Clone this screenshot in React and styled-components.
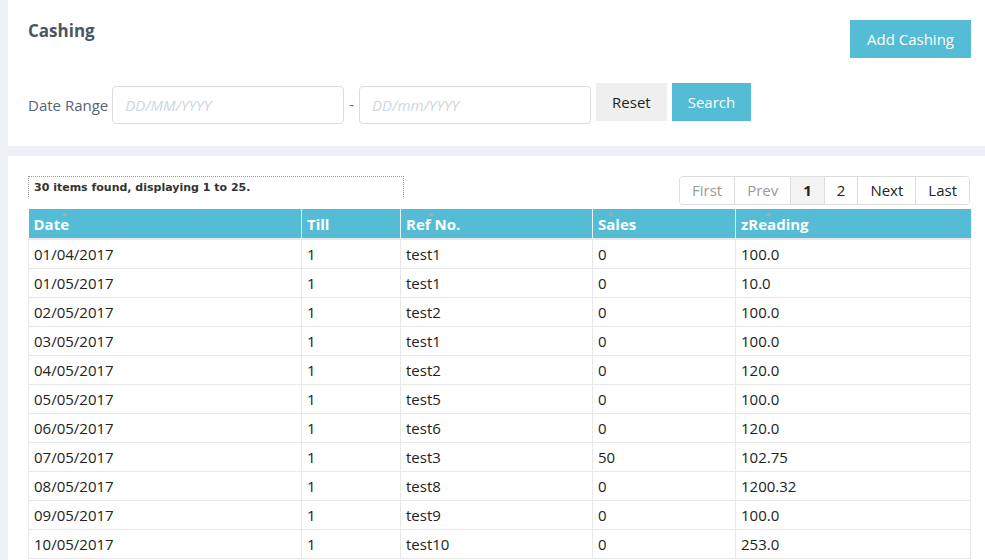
import React from "react";
import styled, { createGlobalStyle } from "styled-components";

const GlobalStyle = createGlobalStyle`
  html, body {
    margin: 0;
    background: #edf1f5;
    font-family: "Open Sans", "Noto Sans", sans-serif;
    overflow: hidden;
  }
`;

const rows = [
  ["01/04/2017", "1", "test1", "0", "100.0"],
  ["01/05/2017", "1", "test1", "0", "10.0"],
  ["02/05/2017", "1", "test2", "0", "100.0"],
  ["03/05/2017", "1", "test1", "0", "100.0"],
  ["04/05/2017", "1", "test2", "0", "120.0"],
  ["05/05/2017", "1", "test5", "0", "100.0"],
  ["06/05/2017", "1", "test6", "0", "120.0"],
  ["07/05/2017", "1", "test3", "50", "102.75"],
  ["08/05/2017", "1", "test8", "0", "1200.32"],
  ["09/05/2017", "1", "test9", "0", "100.0"],
  ["10/05/2017", "1", "test10", "0", "253.0"],
];

const columns = [
  { label: "Date", width: 273, caret: 72 },
  { label: "Till", width: 99 },
  { label: "Ref No.", width: 192, caret: 60 },
  { label: "Sales", width: 143, caret: 36 },
  { label: "zReading", width: 235, caret: 66 },
];

const pages = [
  { label: "First", state: "disabled" },
  { label: "Prev", state: "disabled" },
  { label: "1", state: "active" },
  { label: "2" },
  { label: "Next" },
  { label: "Last" },
];

const Page = styled.div`
  padding-left: 8px;
  height: 560px;
  box-sizing: border-box;
`;

const FilterPanel = styled.section`
  background: #fff;
  height: 146px;
  box-sizing: border-box;
  padding: 20px 14px 0 20px;
`;

const TitleRow = styled.div`
  display: flex;
  justify-content: space-between;
  align-items: flex-start;
`;

const Title = styled.h2`
  margin: 0;
  font-size: 17px;
  line-height: 22px;
  font-weight: 700;
  color: #4b5563;
`;

const Button = styled.button`
  border: none;
  border-radius: 0;
  height: 38px;
  padding: 0 ${(p) => p.$pad || 17}px;
  font-family: "Open Sans", "Noto Sans", sans-serif;
  font-size: 15px;
  background: ${(p) => (p.$primary ? "#54bcd4" : "#efefef")};
  color: ${(p) => (p.$primary ? "#fff" : "#222")};
`;

const FilterRow = styled.div`
  display: flex;
  align-items: flex-start;
  margin-top: 25px;
  gap: 5px;
`;

const Label = styled.span`
  font-size: 15px;
  color: #55657a;
  line-height: 38px;
  margin-top: 3px;
  margin-right: -1px;
`;

const DateInput = styled.input`
  width: 232px;
  height: 38px;
  box-sizing: border-box;
  margin-top: 3px;
  border: 1px solid #dcdcdc;
  border-radius: 4px;
  padding: 0 12px;
  font-family: "Open Sans", "Noto Sans", sans-serif;
  font-size: 15px;
  &::placeholder {
    color: #cfd6e0;
    font-style: italic;
  }
`;

const Dash = styled.span`
  color: #667;
  font-size: 15px;
  line-height: 38px;
  margin-top: 2px;
`;

const ListPanel = styled.section`
  background: #fff;
  margin-top: 10px;
  height: 404px;
  padding: 20px 15px 0 20px;
`;

const ListTop = styled.div`
  display: flex;
  justify-content: space-between;
  align-items: flex-start;
`;

const Info = styled.div`
  width: 376px;
  height: 21px;
  box-sizing: border-box;
  border: 1px dotted #999;
  border-bottom: none;
  padding: 4px 5px 0;
  font-family: "DejaVu Sans", Verdana, sans-serif;
  font-size: 11px;
  font-weight: 700;
  color: #333;
`;

const Pager = styled.div`
  display: flex;
  border: 1px solid #dddddd;
  border-radius: 4px;
  overflow: hidden;
  height: 29px;
  box-sizing: border-box;
`;

const PageItem = styled.span`
  padding: 0 12px;
  line-height: 27px;
  font-size: 15px;
  border-left: 1px solid #dddddd;
  &:first-child {
    border-left: none;
  }
  color: ${(p) => (p.$state === "disabled" ? "#9a9a9a" : "#222")};
  font-weight: ${(p) => (p.$state === "active" ? 700 : 400)};
  background: ${(p) => (p.$state === "active" ? "#f3f3f3" : "#fff")};
`;

const Table = styled.table`
  margin-top: 4px;
  width: 942px;
  table-layout: fixed;
  border-collapse: collapse;
  font-size: 15px;
`;

const HeadCell = styled.th`
  position: relative;
  background: #54bcd4;
  color: #fff;
  font-weight: 700;
  text-align: left;
  height: 29px;
  padding: 0 5px;
  border-right: 1px solid #e8f6fa;
  border-bottom: 2px solid #e8e8e8;
  &:last-child {
    border-right: none;
  }
`;

const Caret = styled.span`
  position: absolute;
  top: 3px;
  left: ${(p) => p.$left}px;
  width: 0;
  height: 0;
  border-left: 3px solid transparent;
  border-right: 3px solid transparent;
  border-bottom: 4px solid #a9a9a9;
`;

const Cell = styled.td`
  height: 28px;
  padding: 0 5px;
  color: #222;
  border: 1px solid #e8e8e8;
  border-top: none;
  white-space: nowrap;
`;

export default function App() {
  return (
    <Page>
      <GlobalStyle />
      <FilterPanel>
        <TitleRow>
          <Title>Cashing</Title>
          <Button $primary $pad={17}>Add Cashing</Button>
        </TitleRow>
        <FilterRow>
          <Label>Date Range</Label>
          <DateInput placeholder="DD/MM/YYYY" />
          <Dash>-</Dash>
          <DateInput placeholder="DD/mm/YYYY" />
          <Button $pad={16}>Reset</Button>
          <Button $primary $pad={16}>Search</Button>
        </FilterRow>
      </FilterPanel>
      <ListPanel>
        <ListTop>
          <Info>30 items found, displaying 1 to 25.</Info>
          <Pager>
            {pages.map((p) => (
              <PageItem key={p.label} $state={p.state}>
                {p.label}
              </PageItem>
            ))}
          </Pager>
        </ListTop>
        <Table>
          <colgroup>
            {columns.map((c) => (
              <col key={c.label} style={{ width: c.width }} />
            ))}
          </colgroup>
          <thead>
            <tr>
              {columns.map((c) => (
                <HeadCell key={c.label}>
                  {c.label}
                  {c.caret && <Caret $left={c.caret / 2 - 3} />}
                </HeadCell>
              ))}
            </tr>
          </thead>
          <tbody>
            {rows.map((r) => (
              <tr key={r[0]}>
                {r.map((v, i) => (
                  <Cell key={i}>{v}</Cell>
                ))}
              </tr>
            ))}
          </tbody>
        </Table>
      </ListPanel>
    </Page>
  );
}
